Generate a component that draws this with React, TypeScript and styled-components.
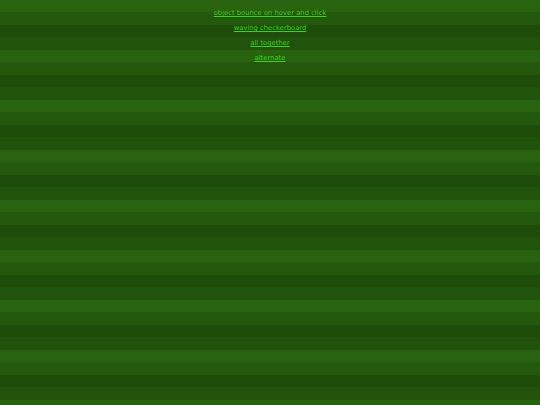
import React from "react";
import styled, { createGlobalStyle } from "styled-components";

const GlobalStyle = createGlobalStyle`
  html, body {
    margin: 0;
    padding: 0;
    height: 100%;
  }
  body {
    background-color: #22550c;
    background-image:
      repeating-conic-gradient(rgba(0, 0, 0, 0.06) 0% 25%, transparent 0% 50%),
      repeating-linear-gradient(
        to bottom,
        #29660f 0px, #29660f 12px,
        #245b0d 12px, #245b0d 25px,
        #1f4f0b 25px, #1f4f0b 37px,
        #22550c 37px, #22550c 50px
      );
    background-size: 2px 2px, auto;
  }
  #root {
    min-height: 100%;
  }
`;

const Page = styled.div`
  width: 540px;
  height: 405px;
  display: flex;
  flex-direction: column;
  align-items: center;
  padding-top: 6px;
  box-sizing: border-box;
  font-family: "DejaVu Sans", Verdana, sans-serif;
`;

const DemoLink = styled.a`
  display: block;
  font-size: 6.8px;
  line-height: 15px;
  color: #3ccf28;
  text-decoration: underline;
`;

const links = [
  "object bounce on hover and click",
  "waving checkerboard",
  "all together",
  "alternate",
];

export default function App(): JSX.Element {
  return (
    <>
      <GlobalStyle />
      <Page>
        {links.map((label) => (
          <DemoLink key={label} href="#">
            {label}
          </DemoLink>
        ))}
      </Page>
    </>
  );
}
